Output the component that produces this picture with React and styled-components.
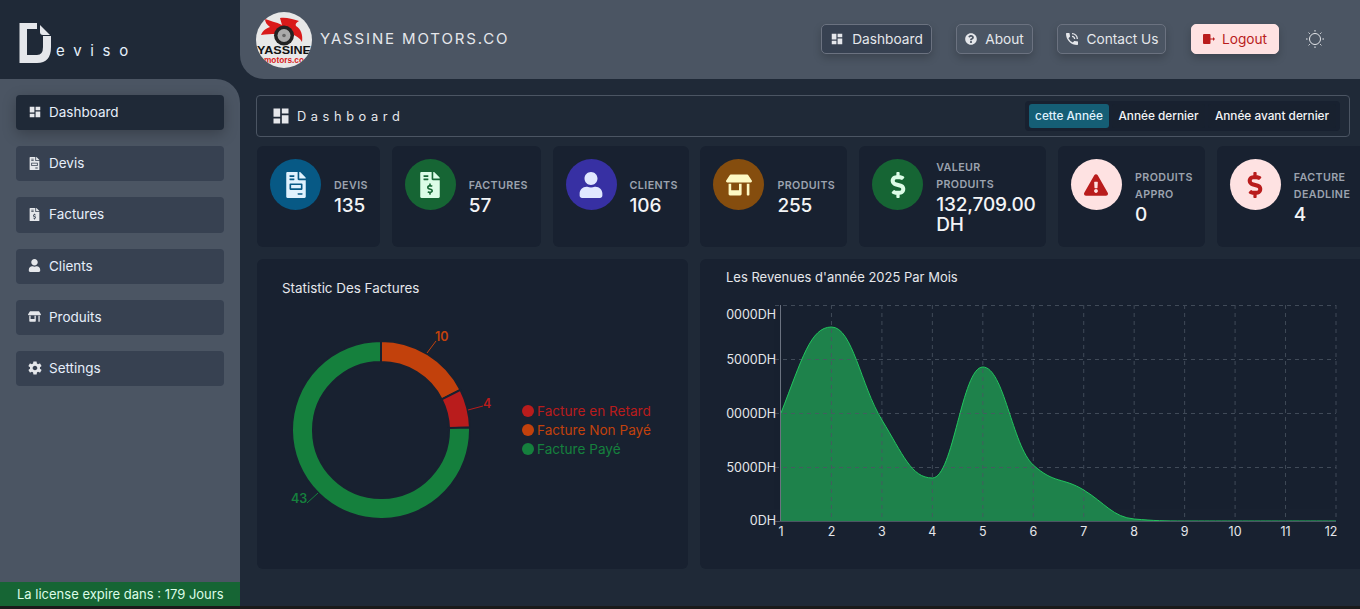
import React from 'react';
import styled, { createGlobalStyle } from 'styled-components';
import { MdDashboard, MdPhoneInTalk } from 'react-icons/md';
import { FaFileInvoice, FaFileInvoiceDollar, FaUser, FaStoreAlt, FaDollarSign, FaExclamationTriangle, FaQuestionCircle } from 'react-icons/fa';
import { IoMdSettings } from 'react-icons/io';

const Global = createGlobalStyle`
  html, body { margin: 0; padding: 0; height: 609px; overflow: hidden; background: #1a1a1a; }
  * { box-sizing: border-box; }
  body { font-family: Inter, "Open Sans", sans-serif; }
  svg { flex: none; }
`;

const Page = styled.div`
  width: 1360px; height: 606px; display: grid;
  grid-template-columns: 240px 1fr; grid-template-rows: 79px 1fr;
  background: #1f2937; overflow: hidden;
`;
const Brand = styled.div`
  display: flex; align-items: flex-start; padding: 22px 0 0 19px; background: #1f2937;
`;
const BrandName = styled.span`
  margin: 19px 0 0 4px; font-size: 15px; letter-spacing: 8.7px; color: #e5f0fb; line-height: 20px;
`;
const TopBar = styled.header`
  display: flex; align-items: center; padding: 0 35px 0 16px; background: #4b5563;
  border-bottom-left-radius: 24px;
`;
const Company = styled.h1`
  margin: 0 0 3px 8px; font-size: 15px; font-weight: 400; letter-spacing: 1.85px; color: #e5e7eb; flex: 1;
`;
const NavLinks = styled.nav`display: flex; align-items: center; gap: 24px; margin-bottom: 2px;`;
const TopButton = styled.button`
  display: flex; align-items: center; justify-content: center; gap: ${p => p.$gap || 8}px; height: 30px; padding: 0;
  width: ${p => p.$w}px; border-radius: 5px; font: 400 13.7px Inter, sans-serif;
  margin-left: ${p => p.$danger ? 1 : 0}px;
  border: 1px solid ${p => p.$danger ? '#fee2e2' : '#6b7280'};
  background: ${p => p.$danger ? '#fee2e2' : p.$active ? '#374151' : 'transparent'};
  color: ${p => p.$danger ? '#b91c1c' : '#e5e7eb'};
  box-shadow: 0 4px 8px rgba(0,0,0,.2);
`;
const SunButton = styled.span`display: flex; color: #e5e7eb; margin: 0 1px 0 3px;`;

const Side = styled.aside`
  display: flex; flex-direction: column; background: #4b5563; border-top-right-radius: 24px;
`;
const SideNav = styled.nav`
  flex: 1; display: flex; flex-direction: column; gap: 16px; padding: 16px 16px 0;
`;
const SideItem = styled.a`
  height: 35.2px; display: flex; align-items: center; gap: 8px; padding: 0 0 1px 12px; border-radius: 4px;
  font-size: 13.5px; color: #e6eefa;
  background: ${p => p.$active ? '#1f2937' : '#374151'};
  box-shadow: ${p => p.$active ? '0 4px 14px rgba(0,0,0,.25)' : 'none'};
`;
const SideIcon = styled.span`display: flex; width: 13px; justify-content: center; font-size: 13px; color: #e5e7eb;`;
const License = styled.div`
  height: 24px; display: flex; align-items: center; padding-left: 17px; background: #166534;
  color: #dcfce7; font-size: 13px;
`;

const Main = styled.main`
  min-width: 0; padding: 16px 0 0 16px; overflow: hidden; display: flex; flex-direction: column;
`;
const TitleBar = styled.div`
  width: 1094px; height: 42px; flex: none; display: flex; align-items: center; justify-content: space-between;
  padding: 0 9px 0 14px; border: 1px solid #4b5563; border-radius: 4px;
`;
const PageTitle = styled.div`
  display: flex; align-items: center; gap: 6px; font-size: 12.8px; letter-spacing: 4.6px; color: #e5e7eb;
`;
const Tabs = styled.div`
  display: flex; gap: 3px; height: 30px; padding: 3px 4px; background: #182130; border-radius: 4px;
`;
const Tab = styled.button`
  border: 0; border-radius: 3px; padding: 0; width: ${p => p.$w}px; font: 500 11.8px Inter, sans-serif;
  background: ${p => p.$active ? '#155e75' : '#18212f'};
  color: ${p => p.$active ? '#e0f2fe' : '#f3f4f6'};
`;
const Stats = styled.section`
  display: grid; grid-template-columns: 123px 149px 136px 147px 187px 147px 160px; grid-template-rows: 101px; column-gap: 11.8px;
  height: 101px; margin: 9px 0 12px 1px; flex: none;
`;
const StatCard = styled.div`
  display: flex; align-items: center; gap: 13px; padding: 0 13px; background: #182130; border-radius: 6px; min-width: 0;
`;
const StatIcon = styled.span`
  width: 51px; height: 51px; flex: none; align-self: flex-start; margin-top: 13px; display: flex; align-items: center; justify-content: center;
  border-radius: 50%; font-size: ${p => p.$size || 26}px; background: ${p => p.$bg}; color: ${p => p.$fg};
`;
const StatText = styled.div`display: flex; flex-direction: column; min-width: 0;`;
const StatLabel = styled.span`
  font-size: 10.7px; font-weight: 600; line-height: 17px; letter-spacing: .4px; color: #9ca3af; text-transform: uppercase;
  white-space: pre-line;
`;
const StatValue = styled.span`
  font-size: 19px; font-weight: 500; line-height: 20px; letter-spacing: -.15px; color: #f3f4f6; margin-top: 2px;
`;
const Charts = styled.section`
  display: grid; grid-template-columns: 431px 680px; gap: 12px; height: 310px; margin-left: 1px; flex: none;
`;
const ChartCard = styled.div`background: #182130; border-radius: 6px; overflow: hidden; display: flex; flex-direction: column;`;
const ChartTitle = styled.h2`
  margin: 0; font-size: ${p => p.$size}px; font-weight: 400; line-height: 18px; color: #e5e7eb;
  padding: ${p => p.$pad};
`;
const DonutRow = styled.div`display: flex; align-items: center; gap: 23px; padding: 32px 0 0 22px;`;
const DonutSvg = styled.svg`flex: none; display: block;`;
const Legend = styled.ul`margin: 0; padding: 0; list-style: none; display: flex; flex-direction: column; gap: 0;`;
const LegendItem = styled.li`
  display: flex; align-items: center; gap: 3px; height: 19px; font-size: 13.6px; color: ${p => p.$c};
`;
const Dot = styled.i`width: 12px; height: 12px; border-radius: 50%; background: ${p => p.$c};`;
const AreaSvg = styled.svg`display: block; margin-top: 3px;`;

const polar = (a, r) => {
  const t = (a - 90) * Math.PI / 180;
  return [102 + r * Math.cos(t), 101 + r * Math.sin(t)];
};
function arc(a0, a1, R, r) {
  const [x0, y0] = polar(a0, R), [x1, y1] = polar(a1, R), [x2, y2] = polar(a1, r), [x3, y3] = polar(a0, r);
  const large = a1 - a0 > 180 ? 1 : 0;
  return `M${x0} ${y0}A${R} ${R} 0 ${large} 1 ${x1} ${y1}L${x2} ${y2}A${r} ${r} 0 ${large} 0 ${x3} ${y3}Z`;
}

function Donut() {
  const segs = [
    { c: '#c2410c', a: 0, b: 63.2 },
    { c: '#b91c1c', a: 63.2, b: 88.4 },
    { c: '#15803d', a: 88.4, b: 360 },
  ];
  return (
    <DonutSvg width="220" height="202" viewBox="0 0 220 202">
      {segs.map(s => <path key={s.c} d={arc(s.a, s.b, 89, 68)} fill={s.c} stroke="#182130" strokeWidth="2" />)}
      <g fill="none" strokeWidth="1">
        <path d="M148 24 L157 12" stroke="#c2410c" />
        <path d="M189 81 L204 77" stroke="#b91c1c" />
        <path d="M39 164 L28 174" stroke="#15803d" />
      </g>
      <g fontFamily="Inter, sans-serif" fontSize="12.5" fontWeight="600">
        <text x="156" y="12" fill="#c2410c">10</text>
        <text x="204" y="79" fill="#b91c1c">4</text>
        <text x="12" y="174" fill="#15803d">43</text>
      </g>
    </DonutSvg>
  );
}

const PL = 81, PW = 555, PT = 16, PH = 216;
const vals = [108, 194, 101, 43, 154, 56, 31, 2, 0, 0, 0, 0];
function areaPath() {
  const n = vals.length, h = PW / (n - 1);
  const pts = vals.map((v, i) => [PL + i * h, PT + PH - v]);
  const s = [];
  for (let i = 0; i < n - 1; i++) s.push((pts[i + 1][1] - pts[i][1]) / h);
  const m = pts.map((_, i) => {
    if (i === 0) return s[0] * 1.5;
    if (i === n - 1) return 0;
    if (s[i - 1] * s[i] <= 0) return 0;
    return 2 * s[i - 1] * s[i] / (s[i - 1] + s[i]) * 1.15;
  });
  let d = `M${pts[0][0]} ${pts[0][1]}`;
  for (let i = 0; i < n - 1; i++) {
    d += `C${pts[i][0] + h / 2.4} ${pts[i][1] + m[i] * h / 2.4} ${pts[i + 1][0] - h / 2.4} ${pts[i + 1][1] - m[i + 1] * h / 2.4} ${pts[i + 1][0]} ${pts[i + 1][1]}`;
  }
  return d;
}

function AreaChart() {
  const line = areaPath();
  const h = PW / 11;
  const months = Array.from({ length: 12 }, (_, i) => i);
  const ys = [0, 1, 2, 3, 4].map(i => PT + i * PH / 4);
  const labels = ['0000DH', '5000DH', '0000DH', '5000DH', '0DH'];
  const labelY = [PT + 14, PT + 59, PT + 113, PT + 167, PT + 220];
  return (
    <AreaSvg width="680" height="260" viewBox="0 0 680 260">
      <path d={`${line}L${PL + PW} ${PT + PH}L${PL} ${PT + PH}Z`} fill="#1e824c" />
      <g stroke="#4b5563" strokeWidth="1" strokeDasharray="4 4" opacity=".8">
        {ys.slice(0, 4).map(y => <line key={y} x1={PL - 6} x2={PL + PW} y1={y + .5} y2={y + .5} />)}
        {months.slice(1).map(i => <line key={i} x1={PL + i * h} x2={PL + i * h} y1={PT} y2={PT + PH} />)}
      </g>
      <path d={line} fill="none" stroke="#22c55e" strokeWidth="1" />
      <line x1={PL - .5} x2={PL - .5} y1={PT} y2={PT + PH} stroke="#6b7280" />
      <line x1={PL - 6} x2={PL + PW} y1={PT + PH + .5} y2={PT + PH + .5} stroke="#4b5563" />
      <g fontFamily="Inter, sans-serif" fontSize="12.5" fill="#e5e7eb">
        {labels.map((l, i) => <text key={i} x={PL - 5} y={labelY[i]} textAnchor="end">{l}</text>)}
        {months.map(i => (
          <text key={i} x={PL + i * h - (i === 11 ? 5 : 0)} y={PT + PH + 15} textAnchor="middle">{i + 1}</text>
        ))}
      </g>
    </AreaSvg>
  );
}

const LogoMark = () => (
  <svg width="33" height="41" viewBox="0 0 33 41">
    <path d="M0.5 1H18V7H8V33H18Q24 33 24 25V14H32V25Q32 41 18 41H0.5Z" fill="#e5e7eb" />
    <path d="M21 3L31 13H24Q21 13 21 10Z" fill="#e5e7eb" />
  </svg>
);

const LogoutIcon = () => (
  <svg width="12" height="10" viewBox="0 0 12 10" fill="currentColor">
    <rect x="0" y="0" width="7.5" height="10" rx="1" />
    <path d="M7 4.4H10V3L12 5L10 7V5.6H7Z" />
  </svg>
);

const SunIcon = () => (
  <svg width="18" height="18" viewBox="0 0 18 18" fill="none" stroke="currentColor" strokeWidth="1">
    <circle cx="9" cy="9" r="5.5" />
    <path d="M9 0V1.6M9 16.4V18M0 9H1.6M16.4 9H18M2.6 2.6L3.8 3.8M14.2 14.2L15.4 15.4M15.4 2.6L14.2 3.8M3.8 14.2L2.6 15.4" />
  </svg>
);

const CompanyLogo = () => (
  <svg width="56" height="56" viewBox="0 0 56 56">
    <defs><clipPath id="logoClip"><circle cx="28" cy="28" r="28" /></clipPath></defs>
    <g clipPath="url(#logoClip)">
      <rect width="56" height="56" fill="#e8e8e8" />
      <path d="M9 7C14 9 20 10 26 13L24 6C30 5 36 7 43 9C40 11 39 12 40 14C45 17 47 23 46 30C44 26 40 24 36 22L20 22C15 22 10 22 5 23C7 18 11 16 14 15C11 13 9 10 9 7Z" fill="#d91a1a" />
      <circle cx="28" cy="23.5" r="10" fill="#222" />
      <circle cx="28" cy="23.5" r="6.5" fill="#aaa" />
      <circle cx="28" cy="23.5" r="1.8" fill="#666" />
      <text x="28" y="42" textAnchor="middle" fontFamily="Liberation Sans, sans-serif" fontSize="11" fontWeight="700" fill="#111" textLength="54" lengthAdjust="spacingAndGlyphs">YASSINE</text>
      <text x="28" y="50.5" textAnchor="middle" fontFamily="Liberation Sans, sans-serif" fontSize="8.5" fontWeight="700" fill="#d91a1a" textLength="40" lengthAdjust="spacingAndGlyphs">motors.co</text>
    </g>
  </svg>
);

const side = [
  ['Dashboard', <MdDashboard size={14} />, true],
  ['Devis', <FaFileInvoice />],
  ['Factures', <FaFileInvoiceDollar />],
  ['Clients', <FaUser />],
  ['Produits', <FaStoreAlt />],
  ['Settings', <IoMdSettings size={16} />],
];
const stats = [
  { l: 'Devis', v: '135', i: <FaFileInvoice />, bg: '#075985', fg: '#e0f2fe' },
  { l: 'Factures', v: '57', i: <FaFileInvoiceDollar />, bg: '#166534', fg: '#dcfce7' },
  { l: 'Clients', v: '106', i: <FaUser />, bg: '#3730a3', fg: '#e0e7ff' },
  { l: 'Produits', v: '255', i: <FaStoreAlt />, bg: '#854d0e', fg: '#fef9c3' },
  { l: 'Valeur\nproduits', v: '132,709.00 DH', i: <FaDollarSign />, bg: '#166534', fg: '#dcfce7' },
  { l: 'Produits\nappro', v: '0', i: <FaExclamationTriangle />, bg: '#fee2e2', fg: '#b91c1c', s: 24 },
  { l: 'Facture\ndeadline', v: '4', i: <FaDollarSign />, bg: '#fee2e2', fg: '#b91c1c' },
];

export default function App() {
  return (
    <>
      <Global />
      <Page>
        <Brand><LogoMark /><BrandName>eviso</BrandName></Brand>
        <TopBar>
          <CompanyLogo />
          <Company>YASSINE MOTORS.CO</Company>
          <NavLinks>
            <TopButton $w={111} $active><MdDashboard size={14} />Dashboard</TopButton>
            <TopButton $w={77}><FaQuestionCircle size={12} />About</TopButton>
            <TopButton $w={109} $gap={6}><MdPhoneInTalk size={16} />Contact Us</TopButton>
            <TopButton $w={88} $danger $gap={7}><LogoutIcon />Logout</TopButton>
            <SunButton><SunIcon /></SunButton>
          </NavLinks>
        </TopBar>
        <Side>
          <SideNav>
            {side.map(([t, ic, a]) => (
              <SideItem key={t} $active={a}><SideIcon>{ic}</SideIcon>{t}</SideItem>
            ))}
          </SideNav>
          <License>La license expire dans : 179 Jours</License>
        </Side>
        <Main>
          <TitleBar>
            <PageTitle><MdDashboard size={20} />Dashboard</PageTitle>
            <Tabs>
              <Tab $active $w={80}>cette Année</Tab>
              <Tab $w={93}>Année dernier</Tab>
              <Tab $w={128}>Année avant dernier</Tab>
            </Tabs>
          </TitleBar>
          <Stats>
            {stats.map(s => (
              <StatCard key={s.l}>
                <StatIcon $bg={s.bg} $fg={s.fg} $size={s.s}>{s.i}</StatIcon>
                <StatText>
                  <StatLabel>{s.l}</StatLabel>
                  <StatValue>{s.v}</StatValue>
                </StatText>
              </StatCard>
            ))}
          </Stats>
          <Charts>
            <ChartCard>
              <ChartTitle $size={13.4} $pad="20px 0 0 25px">Statistic Des Factures</ChartTitle>
              <DonutRow>
                <Donut />
                <Legend>
                  <LegendItem $c="#b91c1c"><Dot $c="#b91c1c" />Facture en Retard</LegendItem>
                  <LegendItem $c="#c2410c"><Dot $c="#c2410c" />Facture Non Payé</LegendItem>
                  <LegendItem $c="#15803d"><Dot $c="#15803d" />Facture Payé</LegendItem>
                </Legend>
              </DonutRow>
            </ChartCard>
            <ChartCard>
              <ChartTitle $size={13} $pad="9px 0 0 26px">Les Revenues d'année 2025 Par Mois</ChartTitle>
              <AreaChart />
            </ChartCard>
          </Charts>
        </Main>
      </Page>
    </>
  );
}
